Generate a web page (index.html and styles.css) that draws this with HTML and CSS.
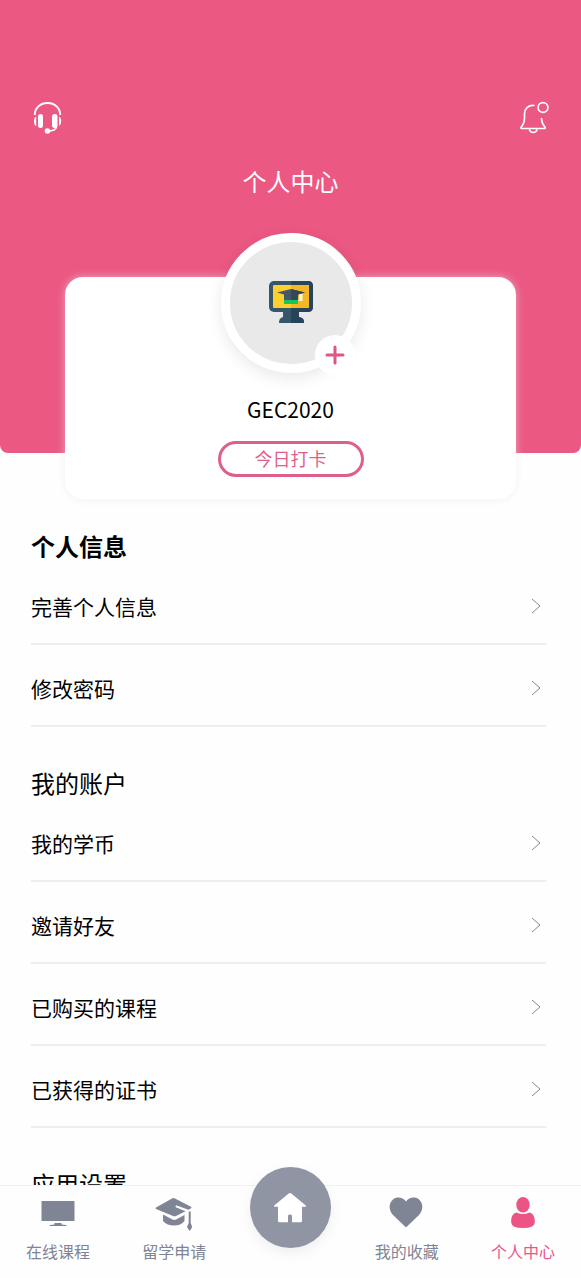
FILE: index.html
```
<!DOCTYPE html>
<html lang="zh-CN">
<head>
<meta charset="utf-8">
<meta name="viewport" content="width=device-width, initial-scale=1">
<title>个人中心</title>
<link rel="stylesheet" href="styles.css">
</head>
<body>
<div class="app">
  <main class="content">
    <header class="hero">
      <div class="toolbar">
        <button class="icon-button" type="button" aria-label="客服">
          <svg width="30" height="34" viewBox="0 0 30 34" fill="none" stroke="#fff">
            <path d="M2.800 14C2.800 6.500 8.500 2 15.500 2S28.200 6.500 28.200 14" stroke-width="1.900"/>
            <rect x="6" y="13" width="5" height="14" rx="2.500" fill="#fff" stroke="none"/>
            <rect x="20" y="13" width="5.500" height="14" rx="2.700" fill="#fff" stroke="none"/>
            <path d="M4.200 15.500v9.500Q2 24 2 20.200t2.200-4.700zM27 15.500q2.200 1 2.200 4.700t-2.200 4.800z" fill="#fff" stroke="none"/>
            <path d="M24.500 26q-1 4-8.500 4" stroke-width="1.600"/>
            <ellipse cx="15.500" cy="30" rx="2.800" ry="2.700" fill="#fff" stroke="none"/>
          </svg>
        </button>
        <button class="icon-button" type="button" aria-label="通知">
          <svg width="30" height="34" viewBox="0 0 30 34" fill="none" stroke="#fff" stroke-width="1.700" stroke-linecap="round" stroke-linejoin="round">
            <path d="M15 4.500C9 4 5.500 8 5.500 13v4c0 5-1 6.500-3.500 9.300Q1.500 27.500 3 27.500H25q1.800 0 1-1.200C23.500 23 22.500 21.500 22.500 17.500"/>
            <path d="M10.500 29q1 2.500 3.700 2.500T18 29"/>
            <circle cx="24" cy="6.500" r="4.900"/>
          </svg>
        </button>
      </div>
      <h1 class="page-title">个人中心</h1>
      <section class="profile">
        <div class="avatar">
          <svg width="44" height="44" viewBox="0 0 44 44">
            <path d="M14 29h16v7l3 1q2 1 2 5H10q0-4 2-5l2-1z" fill="#36566b"/>
            <path d="M22 29h8v7l3 1q2 1 2 5H22z" fill="#28445a"/>
            <rect width="44" height="31" rx="5" fill="#36566b"/>
            <path d="M22 0h17q5 0 5 5v21q0 5-5 5H22z" fill="#28445a"/>
            <rect x="4" y="4" width="36" height="23" rx="1" fill="#ffd02d"/>
            <path d="M22 4h17q1 0 1 1v21q0 1-1 1H22z" fill="#f5b824"/>
            <path d="M15 13h14v10H15z" fill="#44576b"/>
            <path d="M22 13h7v10h-7z" fill="#304858"/>
            <path d="M15 19h14v4H15z" fill="#15c65a"/>
            <path d="M8 11.500 22 8l14 3.500L22 15.500z" fill="#44576b"/>
            <path d="m22 8 14 3.500-14 4z" fill="#304858"/>
            <path d="M30.500 13h3v7h-4z" fill="#fff4df"/>
          </svg>
          <button class="avatar-add" type="button" aria-label="更换头像">
            <svg width="20" height="20" viewBox="0 0 20 20" stroke="#df5583" stroke-width="3" stroke-linecap="round"><path d="M10 2v16M2 10h16"/></svg>
          </button>
        </div>
        <p class="username">GEC2020</p>
        <button class="checkin" type="button">今日打卡</button>
      </section>
    </header>

    <section class="group">
      <h2 class="group-title strong">个人信息</h2>
      <a class="row" href="#info">完善个人信息<svg class="chevron" viewBox="0 0 10 16"><path d="m1 1 8 7-8 7"/></svg></a>
      <a class="row" href="#password">修改密码<svg class="chevron" viewBox="0 0 10 16"><path d="m1 1 8 7-8 7"/></svg></a>
    </section>
    <section class="group">
      <h2 class="group-title">我的账户</h2>
      <a class="row" href="#coins">我的学币<svg class="chevron" viewBox="0 0 10 16"><path d="m1 1 8 7-8 7"/></svg></a>
      <a class="row" href="#invite">邀请好友<svg class="chevron" viewBox="0 0 10 16"><path d="m1 1 8 7-8 7"/></svg></a>
      <a class="row" href="#courses">已购买的课程<svg class="chevron" viewBox="0 0 10 16"><path d="m1 1 8 7-8 7"/></svg></a>
      <a class="row" href="#certificates">已获得的证书<svg class="chevron" viewBox="0 0 10 16"><path d="m1 1 8 7-8 7"/></svg></a>
    </section>
    <section class="group">
      <h2 class="group-title">应用设置</h2>
    </section>
  </main>

  <nav class="tabs">
    <a class="tab" href="#online">
      <svg width="38" height="36" viewBox="0 0 38 36" fill="#808596"><path d="M2.500 5h33v20h-33zM15.500 27h7v1.400q5.500.3 5.500 1.600H10q0-1.300 5.500-1.600z"/></svg>
      在线课程
    </a>
    <a class="tab" href="#abroad">
      <svg width="38" height="36" viewBox="0 0 38 36" fill="#808596">
        <path d="M1 11.500 17.500 2.200q1-.5 2 0L36 10.800q1 .7 0 1.400l-2.500 1.500-11-4q-2-.5-2 .8.100.700 1.500 1.200l8.500 3.500-9 4.600q-2 1-4 0L1 13q-1-.8 0-1.500z"/>
        <path d="M8 18.500l9.500 5q1.800.8 3.500 0l8.500-4.500v6q-3.500 4.500-10.500 4.500T8 25z"/>
        <path d="M33.700 15.500h2V27l1.500 4-2 3.500h-1L32 31l1.700-4z"/>
      </svg>
      留学申请
    </a>
    <a class="home" href="#home" aria-label="首页">
      <svg width="34" height="32" viewBox="0 0 34 32" fill="#fff"><path d="M15.700 1.500q1.300-1 2.600 0l14.500 12q.8 1-.5 1.200H29V29q0 1.300-1.300 1.300H19V24q0-1.500-1.500-1.500h-1Q15 22.500 15 24v6.300H6.300Q5 30.300 5 29V14.700H1.700q-1.300-.2-.5-1.200z"/></svg>
    </a>
    <a class="tab" href="#favorites">
      <svg width="38" height="36" viewBox="0 0 38 36" fill="#808596"><path d="M18 5.500C21 1 27.500.500 31 3.500c5 4.500 4 11.500-.5 16L19 30.500q-1 1-2 0L5.500 19.500C1 15 0 8 5 3.500 8.500.500 15 1 18 5.500z"/></svg>
      我的收藏
    </a>
    <a class="tab active" href="#me" aria-current="page">
      <svg width="38" height="36" viewBox="0 0 38 36" fill="#ed5486"><ellipse cx="19" cy="8.800" rx="6.700" ry="7.800"/><path d="M12.500 16.500q6.500 3 13 0c4 1 5.500 4.500 5.300 10Q30.500 32 19 32T7.200 26.500c-.2-5.500 1.300-9 5.300-10z"/></svg>
      个人中心
    </a>
  </nav>
</div>
</body>
</html>
```
FILE: styles.css
```
* {
  box-sizing: border-box;
}

body {
  margin: 0;
  background: #fefefe;
  color: #000;
  font-family: "Noto Sans CJK SC", sans-serif;
}

h1, h2, p {
  margin: 0;
  font-weight: 400;
}

a {
  color: inherit;
  text-decoration: none;
}

button {
  padding: 0;
  border: 0;
  background: none;
  font: inherit;
  cursor: pointer;
}

svg {
  display: block;
  flex: none;
}

.app {
  display: flex;
  flex-direction: column;
  height: 100vh;
}

.content {
  flex: 1;
  min-height: 0;
  overflow-y: auto;
  scrollbar-width: none;
}

.hero {
  display: flex;
  flex-direction: column;
  margin-bottom: 76px;
  padding: 101px 32px 0;
  background: #eb5882;
  border-radius: 0 0 8px 8px;
}

.toolbar {
  display: flex;
  justify-content: space-between;
}

.page-title {
  margin-top: 28px;
  color: #fff;
  font-size: 24px;
  line-height: 36px;
  text-align: center;
}

/* The card hangs over the lower edge of the hero. */
.profile {
  display: flex;
  flex-direction: column;
  align-items: center;
  margin: 78px 33px -46px;
  padding-bottom: 22px;
  background: #fff;
  border-radius: 18px;
  box-shadow: 0 0 8px rgba(255, 255, 255, 0.5), 0 1px 8px rgba(0, 0, 0, 0.06);
}

.avatar {
  position: relative;
  display: grid;
  place-items: center;
  width: 140px;
  height: 140px;
  margin-top: -44px;
  border: 9px solid #fff;
  border-radius: 50%;
  background: #e9e9e9;
  box-shadow: 0 5px 16px rgba(0, 0, 0, 0.09);
}

.avatar-add {
  position: absolute;
  right: -3px;
  bottom: -11px;
  display: grid;
  place-items: center;
  width: 40px;
  height: 40px;
  border-radius: 50%;
  background: #fff;
}

.username {
  margin-top: 21px;
  font-size: 21px;
  line-height: 30px;
}

.checkin {
  width: 146px;
  height: 36px;
  margin-top: 17px;
  padding-bottom: 2px;
  border: 3px solid #df5f8b;
  border-radius: 18px;
  color: #df5f8b;
  font-size: 18px;
  line-height: 28px;
}

.group {
  margin: 0 35px 39px 31px;
}

.group-title {
  font-size: 24px;
  line-height: 34px;
}

.strong {
  font-weight: 700;
}

.row {
  display: flex;
  align-items: center;
  justify-content: space-between;
  padding: 28px 5px 22px 0;
  border-bottom: 2px solid #eee;
  font-size: 21px;
  line-height: 30px;
}

.chevron {
  width: 10px;
  height: 16px;
  fill: none;
  stroke: #888;
  stroke-width: 1;
}

.tabs {
  position: relative;
  display: grid;
  grid-template-columns: repeat(5, 1fr);
  justify-items: center;
  height: 93px;
  border-top: 1px solid #f5efef;
  background: #fefefe;
}

.tab {
  display: flex;
  flex-direction: column;
  align-items: center;
  gap: 6px;
  padding-top: 10px;
  color: #808596;
  font-size: 16px;
  line-height: 26px;
}

.active {
  color: #ed5486;
}

.home {
  display: grid;
  place-items: center;
  width: 81px;
  height: 81px;
  margin-top: -19px;
  border-radius: 50%;
  background: #9095a4;
  box-shadow: 0 5px 12px rgba(128, 133, 150, 0.12);
}
```
